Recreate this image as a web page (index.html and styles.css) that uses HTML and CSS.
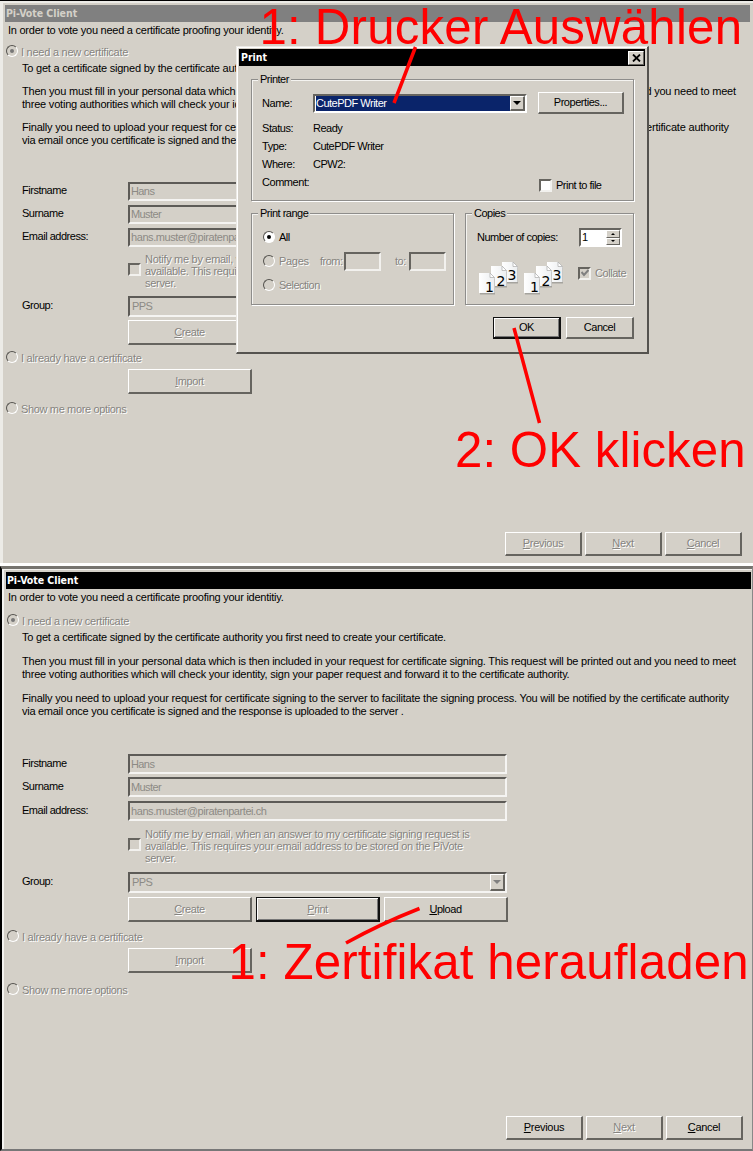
FILE: index.html
```html
<!DOCTYPE html>
<html lang="en">
<head>
<meta charset="utf-8">
<title>Pi-Vote Client</title>
<link rel="stylesheet" href="styles.css">
</head>
<body>
<main class="guide">
  <section class="window inactive">
    <header class="titlebar">Pi-Vote Client</header>
    <div class="form">
      <p class="intro">In order to vote you need a certificate proofing your identitiy.</p>
      <div class="option off"><i class="radio checked"></i><span>I need a new certificate</span></div>
      <div class="copy">
        <p class="l1">To get a certificate signed by the certificate authority you first need to create your certificate.</p>
        <p class="l2">Then you must fill in your personal data which is then included in your request for certificate signing. This request will be printed out and you need to meet</p>
        <p class="l3">three voting authorities which will check your identity, sign your paper request and forward it to the certificate authority.</p>
        <p class="l4">Finally you need to upload your request for certificate signing to the server to facilitate the signing process. You will be notified by the certificate authority</p>
        <p class="l5">via email once you certificate is signed and the response is uploaded to the server .</p>
      </div>
      <div class="field"><label>Firstname</label><div class="input">Hans</div></div>
      <div class="field"><label>Surname</label><div class="input">Muster</div></div>
      <div class="field"><label>Email address:</label><div class="input mail">hans.muster@piratenpartei.ch</div></div>
      <div class="notify off"><i class="check"></i><div><p class="n1">Notify me by email, when an answer to my certificate signing request is</p><p class="n2">available. This requires your email address to be stored on the PiVote</p><p>server.</p></div></div>
      <div class="field"><label>Group:</label><div class="input select">PPS<i class="drop"></i></div></div>
      <div class="actions"><div class="button off"><span><u>C</u>reate</span></div><div class="button off"><span><u>P</u>rint</span></div><div class="button"><span><u>U</u>pload</span></div></div>
      <div class="option off"><i class="radio"></i><span class="o2">I already have a certificate</span></div>
      <div class="actions"><div class="button off"><span><u>I</u>mport</span></div></div>
      <div class="option off"><i class="radio"></i><span class="o3">Show me more options</span></div>
      <footer class="nav"><div class="button off"><span><u>P</u>revious</span></div><div class="button off"><span><u>N</u>ext</span></div><div class="button off"><span><u>C</u>ancel</span></div></footer>
    </div>

    <div class="dialog">
      <header class="titlebar"><span>Print</span><div class="close"><svg width="9" height="8" viewBox="0 0 9 8"><path d="M1 .5L8 7.5M8 .5L1 7.5" stroke="#000" stroke-width="1.8"/></svg></div></header>
      <div class="panel printer">
        <span class="legend">Printer</span>
        <div class="prow name"><label>Name:</label><div class="combo"><span>CutePDF Writer</span><i class="drop"></i></div><div class="button"><span>Properties...</span></div></div>
        <div class="prow"><label>Status:</label><span>Ready</span></div>
        <div class="prow"><label>Type:</label><span class="pdf">CutePDF Writer</span></div>
        <div class="prow"><label>Where:</label><span>CPW2:</span></div>
        <div class="prow last"><label>Comment:</label><div class="tofile"><i class="check white"></i><span>Print to file</span></div></div>
      </div>
      <div class="split">
        <div class="panel range">
          <span class="legend">Print range</span>
          <div class="rrow"><i class="radio on"></i><span>All</span></div>
          <div class="rrow off pages"><i class="radio"></i><span class="pg">Pages</span><span class="from">from:</span><b class="box"></b><span class="to">to:</span><b class="box"></b></div>
          <div class="rrow off"><i class="radio"></i><span class="sel">Selection</span></div>
        </div>
        <div class="panel copies">
          <span class="legend">Copies</span>
          <div class="count"><span>Number of copies:</span><div class="spin"><span>1</span><div class="arrows"><i></i><i></i></div></div></div>
          <div class="collate">
            <svg class="sheets" width="90" height="36" viewBox="0 0 90 36">
              <defs>
                <linearGradient id="paper" x1="0" y1="0" x2="1" y2="0"><stop offset="0" stop-color="#fff"/><stop offset="1" stop-color="#eceef0"/></linearGradient>
                <g id="sheet"><path d="M1 2h11l4 4.500v16H1z" fill="#a5a39e"/><path d="M0 1h11l4.500 4.500v15.500H0z" fill="url(#paper)"/><path d="M11 1v4.500h4.500z" fill="#fff" stroke="#aaa" stroke-width=".7"/></g>
                <g id="set"><use href="#sheet" x="23" y="0"/><use href="#sheet" x="12" y="4"/><use href="#sheet" x="0" y="11"/><text x="28.500" y="19">3</text><text x="17.500" y="24.500">2</text><text x="6" y="31">1</text></g>
              </defs>
              <use href="#set"/><use href="#set" x="45"/>
            </svg>
            <div class="off collate-label"><i class="check ticked"><svg width="8" height="8" viewBox="0 0 8 8"><path d="M.5 3L3 6L7.500 1" fill="none" stroke="#808080" stroke-width="2"/></svg></i><span>Collate</span></div>
          </div>
        </div>
      </div>
      <div class="confirm"><div class="button default"><span>OK</span></div><div class="button"><span>Cancel</span></div></div>
    </div>
  </section>

  <section class="window active">
    <header class="titlebar">Pi-Vote Client</header>
    <div class="form">
      <p class="intro">In order to vote you need a certificate proofing your identitiy.</p>
      <div class="option off"><i class="radio checked"></i><span>I need a new certificate</span></div>
      <div class="copy">
        <p class="l1">To get a certificate signed by the certificate authority you first need to create your certificate.</p>
        <p class="l2">Then you must fill in your personal data which is then included in your request for certificate signing. This request will be printed out and you need to meet</p>
        <p class="l3">three voting authorities which will check your identity, sign your paper request and forward it to the certificate authority.</p>
        <p class="l4">Finally you need to upload your request for certificate signing to the server to facilitate the signing process. You will be notified by the certificate authority</p>
        <p class="l5">via email once you certificate is signed and the response is uploaded to the server .</p>
      </div>
      <div class="field"><label>Firstname</label><div class="input">Hans</div></div>
      <div class="field"><label>Surname</label><div class="input">Muster</div></div>
      <div class="field"><label>Email address:</label><div class="input mail">hans.muster@piratenpartei.ch</div></div>
      <div class="notify off"><i class="check"></i><div><p class="n1">Notify me by email, when an answer to my certificate signing request is</p><p class="n2">available. This requires your email address to be stored on the PiVote</p><p>server.</p></div></div>
      <div class="field"><label>Group:</label><div class="input select">PPS<i class="drop"></i></div></div>
      <div class="actions"><div class="button off"><span><u>C</u>reate</span></div><div class="button default off"><span><u>P</u>rint</span></div><div class="button"><span><u>U</u>pload</span></div></div>
      <div class="option off"><i class="radio"></i><span class="o2">I already have a certificate</span></div>
      <div class="actions"><div class="button off"><span><u>I</u>mport</span></div></div>
      <div class="option off"><i class="radio"></i><span class="o3">Show me more options</span></div>
      <footer class="nav"><div class="button"><span><u>P</u>revious</span></div><div class="button off"><span><u>N</u>ext</span></div><div class="button"><span><u>C</u>ancel</span></div></footer>
    </div>
  </section>

  <svg class="notes" width="753" height="1151" viewBox="0 0 753 1151">
    <path d="M415.500 47L394 103M514 328L539.500 423M346 943Q380 924 419.500 908.500"/>
    <text x="259.500" y="44" textLength="482.500">1: Drucker Auswählen</text>
    <text x="455" y="467" textLength="290.500">2: OK klicken</text>
    <text x="228.500" y="979" textLength="520">1: Zertifikat heraufladen</text>
  </svg>
</main>
</body>
</html>
```
FILE: styles.css
```css
* { box-sizing: border-box; }
body { margin: 0; background: #d4d0c8; font: 11px/13px "Liberation Sans", Arial, sans-serif; color: #000; }
p { margin: 0; }
p, span, label { white-space: nowrap; }
u { text-decoration: underline; text-underline-offset: 1px; text-decoration-thickness: 1px; }
.guide { position: relative; width: 753px; height: 1151px; overflow: hidden; }

.window { position: relative; background: #d4d0c8; }
.inactive { height: 566px; padding: 4px 3px 0 4px; border-top: 1px solid #000; border-bottom: 3px solid #fff; box-shadow: inset 3px 2px #ecebe7; }
.active { height: 585px; padding: 3px 0 0 3px; border: solid #000; border-width: 0 0 0 2px; border-top: 3px solid #76746f; border-bottom: 2px solid #777; border-right: 1px solid #888; box-shadow: inset 2px 1px #f4f3f0; }
.titlebar { height: 17px; padding-left: 1px; color: #fff; background: #000; font: bold 10.5px/17px "DejaVu Sans Condensed", "DejaVu Sans", sans-serif; letter-spacing: -.05px; }
.inactive > .titlebar { margin-left: 1px; background: #808080; color: #d4d0c8; }
.active > .titlebar { margin: 0 1px 0 1px; }

.form { display: grid; grid-template-columns: 1fr; align-items: start; }
.inactive .form { padding: 2px 0 0; grid-template-rows: 22px 16px 120px 23px 23px 25px 43px 24px 32px 17px 34px 129px 24px; }
.active .form { padding: 2px 0 0 1px; grid-template-rows: 24px 16px 123px 23px 24px 27px 44px 25px 34px 17px 36px 132px 24px; }
.intro { padding-left: 4px; letter-spacing: -.25px; }
.active .intro { padding-left: 2px; }
.option { display: flex; gap: 3px; padding-left: 2px; letter-spacing: -.25px; }
.active .option { padding-left: 1px; }
.o2 { letter-spacing: -.28px; }
.o3 { letter-spacing: -.35px; }
.copy { padding-left: 18px; letter-spacing: -.21px; }
.active .copy { padding-left: 16px; }
.l1 { letter-spacing: -.22px; }
.l2, .l4 { margin-top: 10px; }
.l4 { letter-spacing: -.2px; }
.l5 { letter-spacing: -.28px; }
.active .l2, .active .l4 { margin-top: 11px; }

.off { color: #868480; text-shadow: 1px 1px #fff; }
.radio { flex: none; width: 12px; height: 12px; border-radius: 50%; border: 1.500px solid; border-color: #55534f #fff #fff #55534f; display: grid; place-items: center; }
.option .radio { margin-top: -1px; }
.checked::after, .on::after { content: ""; width: 4px; height: 4px; border-radius: 50%; background: #777; }
.on { background: #fff; }
.on::after { background: #000; }
.check { flex: none; width: 13px; height: 13px; border: 2px solid; border-color: #66645f #f2f1ee #f2f1ee #66645f; display: grid; place-items: center; }
.check.white { background: #fff; }

.field { display: grid; grid-template-columns: 106px 379px; padding-left: 18px; align-items: center; }
.field label { letter-spacing: -.48px; padding-bottom: 2px; }
.active .field, .active .actions, .active .notify { padding-left: 16px; }
.input { height: 19px; border: 2px solid; border-color: #5d5b57 #f5f4f2 #f5f4f2 #5d5b57; color: #8c8a85; padding: 0 0 0 1px; line-height: 15px; letter-spacing: -.6px; }
.mail { letter-spacing: -.43px; }
.active .input { height: 20px; padding-top: 1px; }
.active .input.select, .input.select { height: 21px; line-height: 17px; display: flex; justify-content: space-between; padding: 0 0 0 2px; }
.drop { width: 15px; height: 17px; background: #d4d0c8; border: solid; border-width: 1px 2px 2px 1px; border-color: #fff #66645f #66645f #fff; display: grid; place-items: center; }
.drop::after { content: ""; border: 4px solid transparent; border-top-color: #808080; border-bottom: 0; }
.notify { display: flex; padding-left: 18px; gap: 4px; line-height: 12px; letter-spacing: -.295px; }
.notify .check { margin: 10px 0 0 106px; }
.actions { display: flex; gap: 4px; padding-left: 18px; }
.actions::before { content: ""; width: 102px; }
.button { height: 24px; width: 124px; border: solid; border-width: 1px 2px 2px 1px; border-color: #fff #66645f #66645f #fff; background: #d4d0c8; display: flex; align-items: center; justify-content: center; letter-spacing: -.45px; }
.actions .button { height: 25px; }
.default { border-color: #111; box-shadow: inset 1px 1px #fff, inset -1px -1px #777; }
.nav { display: flex; gap: 3px; justify-content: flex-end; padding-right: 8px; }
.active .nav { padding-right: 9px; }
.nav .button { width: 77px; letter-spacing: -.3px; }

.dialog { position: absolute; left: 236px; top: 45px; width: 413px; height: 308px; padding: 2px 3px; background: #d4d0c8; border: solid; border-width: 1px 2px 2px 1px; border-color: #eceae6 #55534f #55534f #eceae6; box-shadow: inset 1px 1px #fff; letter-spacing: -.5px; }
.dialog .titlebar { display: flex; justify-content: space-between; align-items: center; margin: 0 -1px; padding-left: 2px; letter-spacing: 0; }
.close { width: 16px; height: 14px; margin-right: 1px; background: #d4d0c8; border: 1px solid; border-color: #fff #66645f #66645f #fff; display: grid; place-items: center; }
.panel { position: relative; border: 1px solid #8e8d8b; box-shadow: 1px 1px #fff, inset 1px 1px #f4f3f0; }
.legend { position: absolute; left: 6px; top: -7px; padding: 0 2px; background: #d4d0c8; }
.printer { height: 122px; width: 383px; margin: 13px 0 0 11px; padding: 12px 10px 0 10px; }
.prow { display: flex; height: 18px; align-items: center; }
.prow label { flex: none; width: 51px; letter-spacing: -.45px; }
.prow.name { height: 22px; margin-bottom: 5px; }
.combo { flex: none; width: 214px; height: 19px; display: flex; justify-content: space-between; border: 2px solid; border-color: #66645f #fff #fff #66645f; background: #fff; }
.combo span { flex: 1; background: #0a246a; color: #fff; border-left: 1px solid #fff; padding-left: 0; line-height: 15px; }
.combo .drop { height: 15px; }
.combo .drop::after { border-top-color: #000; }
.name .button { flex: none; width: 86px; height: 22px; margin-left: 11px; }
.tofile { display: flex; gap: 4px; margin: 6px 0 0 226px; align-items: center; }
.split { display: flex; gap: 11px; margin: 12px 0 0 11px; }
.range { width: 203px; height: 92px; padding: 13px 0 0 11px; }
.rrow { display: flex; align-items: center; height: 20px; margin-bottom: 4px; }
.rrow .radio { margin-right: 4px; }
.box { flex: none; width: 37px; height: 19px; border: 2px solid; border-color: #66645f #f2f1ee #f2f1ee #66645f; }
.pg { width: 41px; letter-spacing: -.3px; }
.from { width: 24px; }
.to { margin-left: 14px; width: 14px; }
.copies { width: 169px; height: 92px; padding: 13px 11px 0 11px; }
.count { display: flex; justify-content: space-between; align-items: center; height: 21px; }
.spin { width: 43px; height: 19px; border: 2px solid; border-color: #66645f #fff #fff #66645f; background: #fff; display: flex; justify-content: space-between; line-height: 14px; padding-left: 1px; }
.arrows { width: 14px; display: grid; grid-template-rows: 1fr 1fr; }
.arrows i { background: #d4d0c8; border: 1px solid; border-color: #fff #66645f #66645f #fff; display: grid; place-items: center; }
.arrows i::after { content: ""; border: 2px solid transparent; border-top: 0; border-bottom-color: #000; }
.arrows i:last-child::after { transform: scaleY(-1); }
.collate { display: flex; align-items: center; margin: 13px 0 0 2px; }
.sheets { flex: none; font: 14px "DejaVu Sans", sans-serif; letter-spacing: 0; }
.collate-label { display: flex; align-items: center; gap: 4px; margin: -12px 0 0 9px; letter-spacing: -.45px; }
.confirm { display: flex; justify-content: flex-end; gap: 5px; padding: 12px 10px 0 0; }
.confirm .button { width: 68px; height: 22px; }

.notes { position: absolute; left: 0; top: 0; fill: #f00; font: 49.200px "Liberation Sans", Arial, sans-serif; }
.notes path { fill: none; stroke: #f00; stroke-width: 3.500; }
```
